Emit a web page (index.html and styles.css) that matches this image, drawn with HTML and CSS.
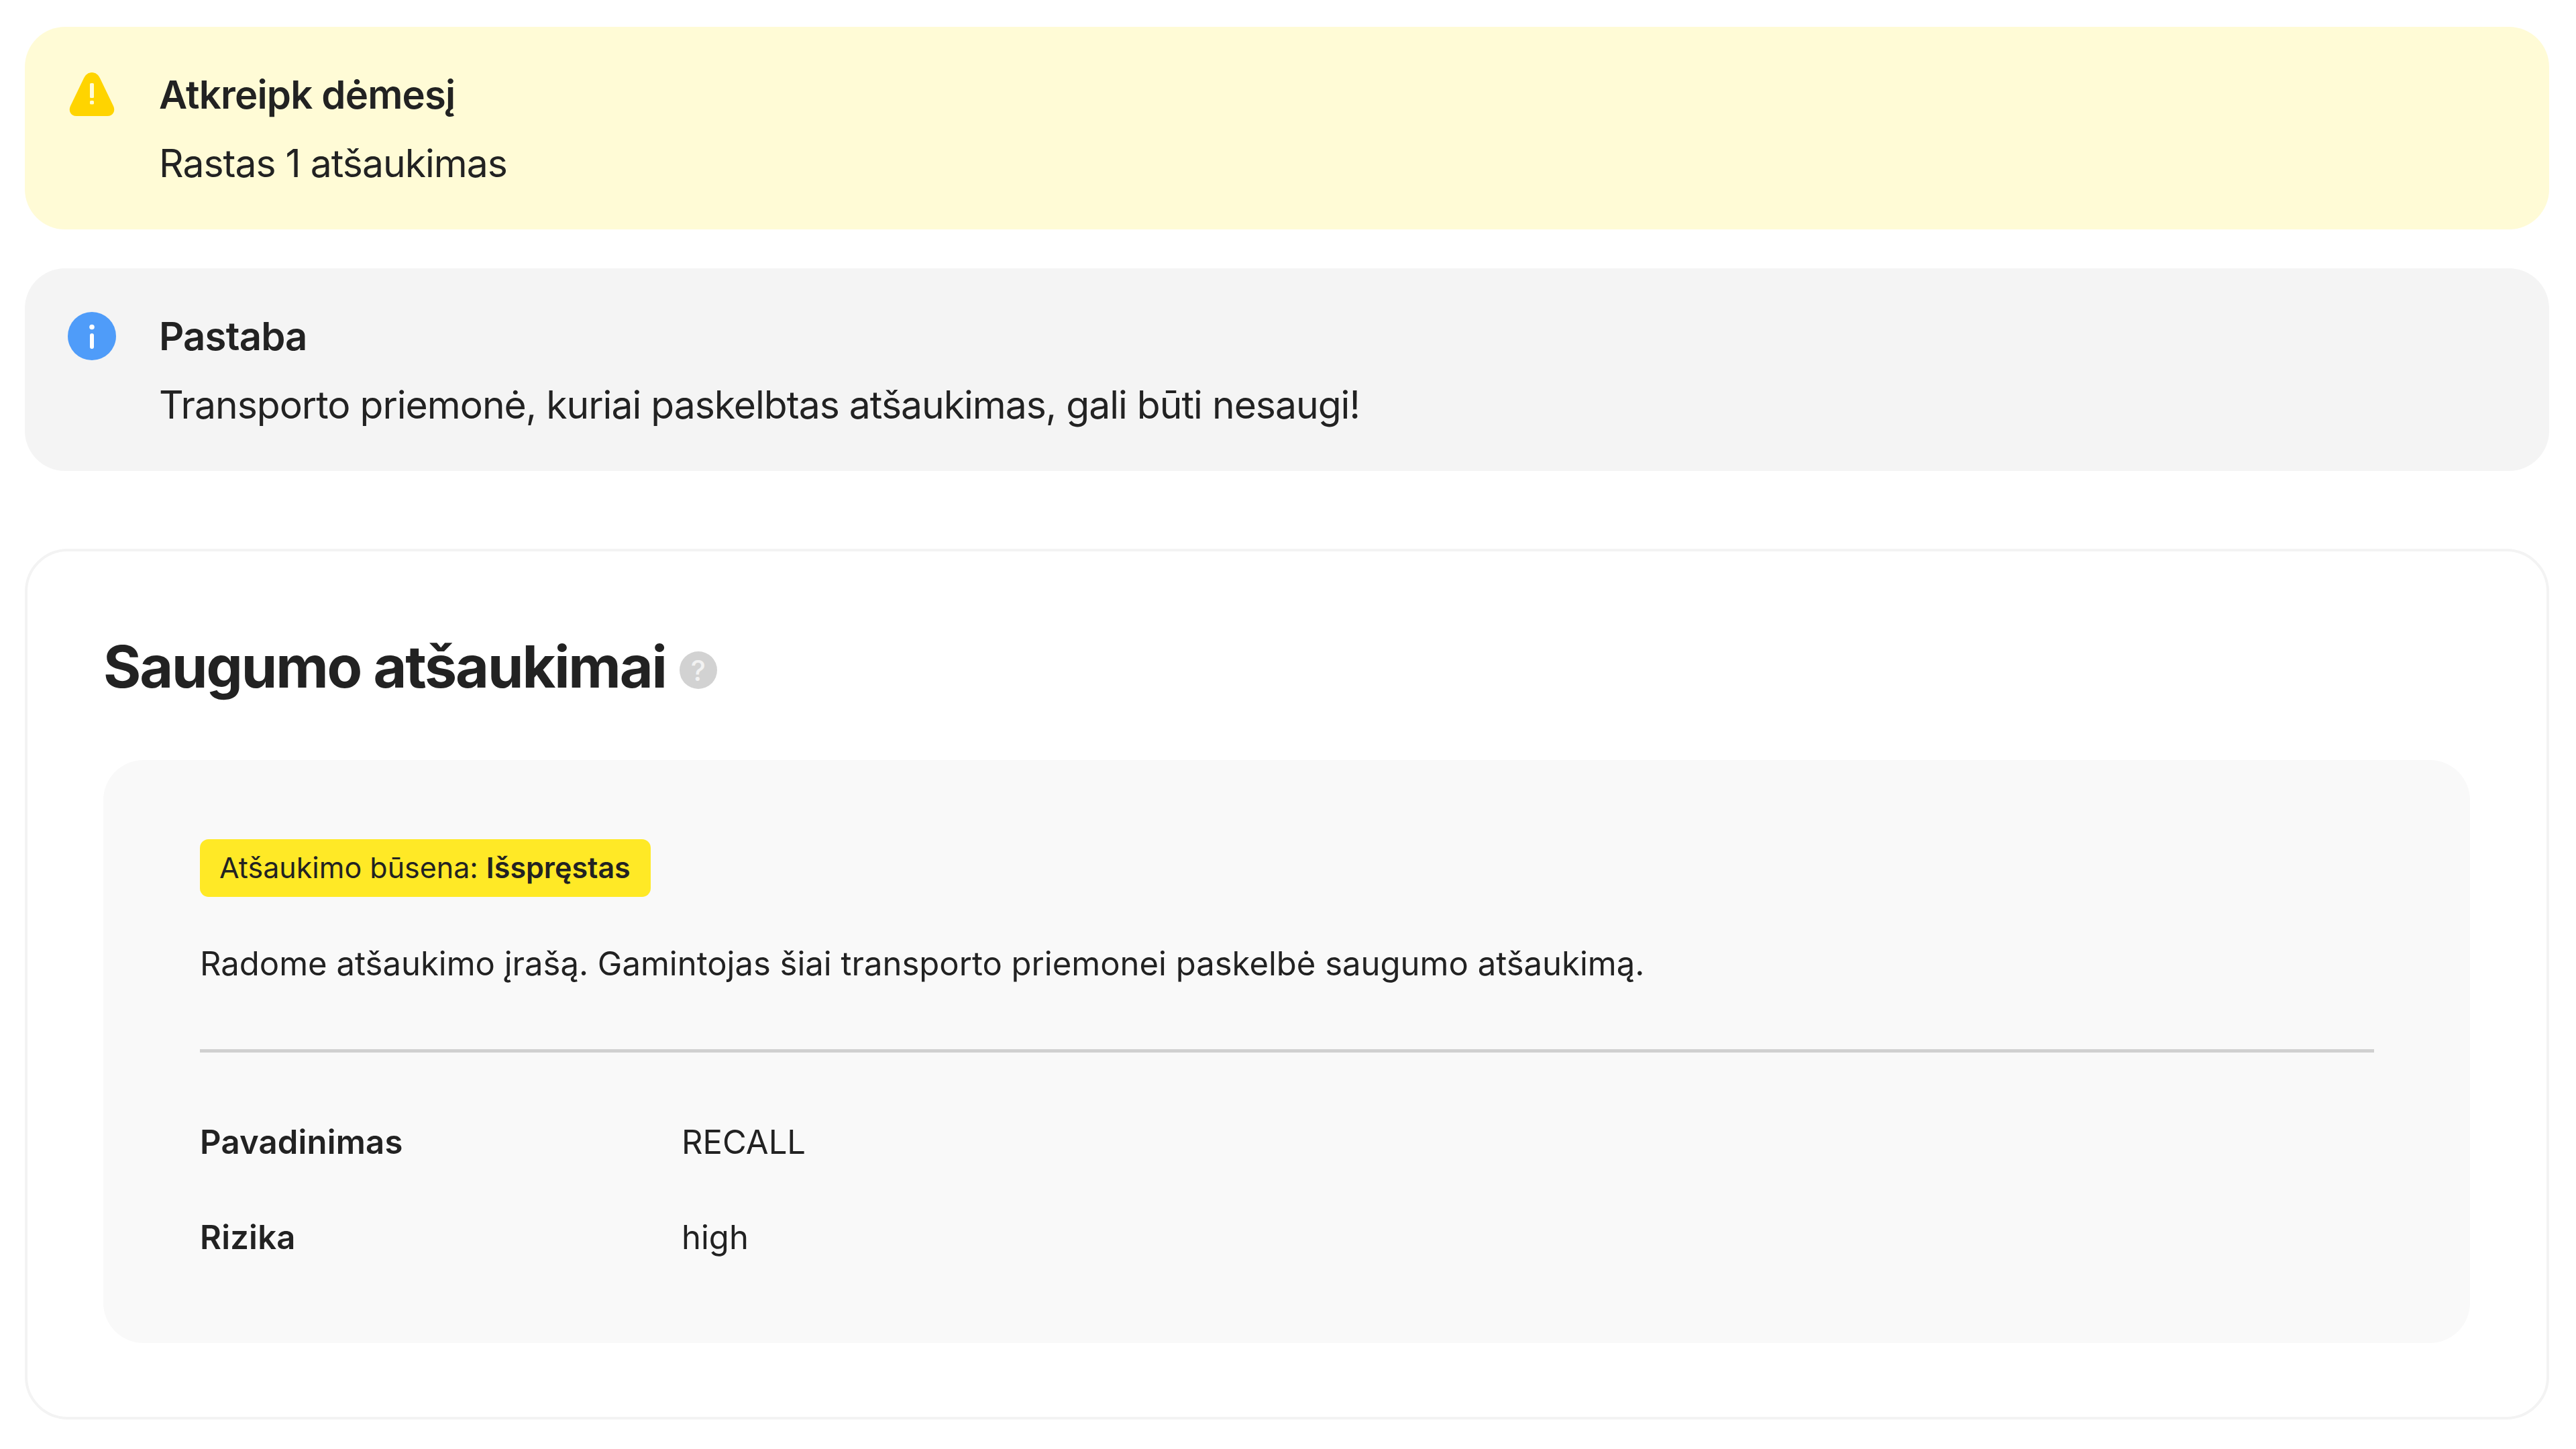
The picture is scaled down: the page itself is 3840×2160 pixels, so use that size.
FILE: index.html
```html
<!DOCTYPE html>
<html lang="lt">
<head>
<meta charset="utf-8">
<title>Saugumo atšaukimai</title>
<link rel="stylesheet" href="styles.css">
</head>
<body>
<main class="page">
  <section class="alert alert-warning">
    <svg class="alert-icon" viewBox="0 0 72 72" aria-hidden="true">
      <path class="warn-shape" d="M36 2c-5.500 0-9.500 3.500-12 8.500L4 52c-3.500 7.500 .5 15 9 15h46c8.500 0 12.500-7.500 9-15L48 10.500C45.500 5.500 41.500 2 36 2z"/>
      <rect class="glyph" x="33" y="18" width="6" height="22" rx="1.500"/>
      <rect class="glyph" x="33" y="44" width="6" height="5.500" rx="1.500"/>
    </svg>
    <div class="alert-body">
      <h3 class="alert-title">Atkreipk dėmesį</h3>
      <p class="alert-text">Rastas 1 atšaukimas</p>
    </div>
  </section>
  <section class="alert alert-note">
    <svg class="alert-icon" viewBox="0 0 72 72" aria-hidden="true">
      <circle class="info-shape" cx="36" cy="35" r="36"/>
      <circle class="glyph" cx="36" cy="21.500" r="3.800"/>
      <rect class="glyph" x="33" y="31" width="6" height="23" rx="3"/>
    </svg>
    <div class="alert-body">
      <h3 class="alert-title">Pastaba</h3>
      <p class="alert-text">Transporto priemonė, kuriai paskelbtas atšaukimas, gali būti nesaugi!</p>
    </div>
  </section>
  <section class="card">
    <div class="card-heading">
      <h2 class="card-title">Saugumo atšaukimai</h2>
      <span class="help" aria-label="Pagalba">?</span>
    </div>
    <div class="panel">
      <div class="badge">Atšaukimo būsena: <strong>Išspręstas</strong></div>
      <p class="panel-text">Radome atšaukimo įrašą. Gamintojas šiai transporto priemonei paskelbė saugumo atšaukimą.</p>
      <hr class="divider">
      <dl class="facts">
        <dt>Pavadinimas</dt><dd>RECALL</dd>
        <dt>Rizika</dt><dd>high</dd>
      </dl>
    </div>
  </section>
</main>
</body>
</html>
```
FILE: styles.css
```css
* { box-sizing: border-box; }
html, body { margin: 0; background: #fff; }
body { font-family: "Inter", "Liberation Sans", sans-serif; color: #222; }
.page { width: 3840px; height: 2160px; padding: 40px 40px 0 37px; display: flex; flex-direction: column; overflow: hidden; }
.alert { height: 302px; border-radius: 60px; padding: 66px 64px 0; display: flex; gap: 64px; }
.alert-warning { background: #fffbd6; }
.alert-note { background: #f4f4f4; margin-top: 58px; }
.alert-icon { width: 72px; height: 72px; flex: none; overflow: visible; }
.warn-shape { fill: #ffd400; }
.info-shape { fill: #4f9cf9; }
.glyph { fill: #fffbd6; }
.alert-note .glyph { fill: #fff; }
.alert-title { margin: 0; font-size: 58px; line-height: 70px; font-weight: 600; letter-spacing: -0.8px; }
.alert-text { margin: 33px 0 0; font-size: 57px; line-height: 70px; font-weight: 400; letter-spacing: -1px; }
.card { margin-top: 116px; height: 1298px; border: 4px solid #f3f3f3; border-radius: 64px; padding: 124px 114px 0 113px; }
.card-heading { display: flex; align-items: center; gap: 20px; height: 96px; }
.card-title { margin: 0; font-size: 86px; line-height: 96px; font-weight: 700; letter-spacing: -2.100px; }
.help { width: 56px; height: 56px; margin-top: 10px; border-radius: 50%; background: #d2d2d2; color: #f2f2f2; font-size: 42px; font-weight: 500; display: flex; align-items: center; justify-content: center; }
.panel { margin-top: 91px; height: 869px; background: #f9f9f9; border-radius: 60px; padding: 118px 143px 0 144px; }
.badge { display: inline-block; height: 86px; line-height: 84px; padding: 0 30px 0 29px; border-radius: 13px; background: #ffe926; font-size: 43px; }
.badge strong { font-weight: 600; }
.panel-text { margin: 68px 0 0; font-size: 49px; line-height: 64px; }
.divider { margin: 95px 0 0; height: 5px; border: 0; background: #d0d0d0; }
.facts { margin: 102px 0 0; display: grid; grid-template-columns: 718px 1fr; row-gap: 78px; font-size: 49px; line-height: 64px; }
.facts dt { font-weight: 600; letter-spacing: 0.2px; }
.facts dd { margin: 0; }
```
